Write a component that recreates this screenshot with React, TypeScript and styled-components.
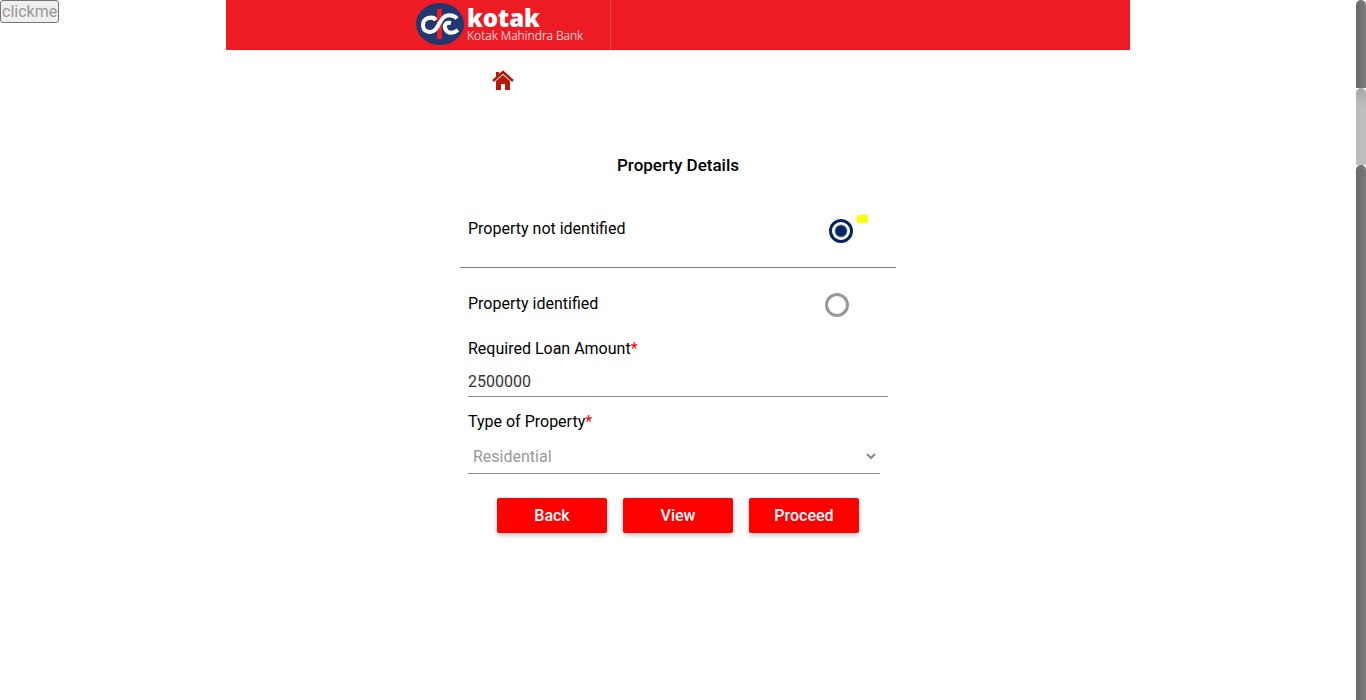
import React, { useState } from "react";
import styled, { createGlobalStyle } from "styled-components";

const GlobalStyle = createGlobalStyle`
  *, *::before, *::after { box-sizing: border-box; }
  body { margin: 0; background: #fff; color: #000; font-family: Roboto, "Liberation Sans", sans-serif; font-size: 16px; }
  button, input, select { font: inherit; }
`;

const Page = styled.div`
  display: flex;
  min-height: 100vh;
`;

const Columns = styled.div`
  flex: 1;
  display: grid;
  grid-template-columns: 1fr 4fr 1fr;
  align-items: start;
`;

const DebugButton = styled.button`
  justify-self: start;
  height: 23px;
  padding: 0 1px;
  border: 1px solid #767676;
  border-radius: 3px;
  background: #efefef;
  color: #999;
  line-height: 20px;
`;

const Header = styled.header`
  display: flex;
  height: 50px;
  background: #ed1c24;
`;

const Brand = styled.a`
  display: flex;
  align-items: flex-start;
  gap: 3px;
  width: 385px;
  padding: 3px 0 0 190px;
  border-right: 1px solid #f2474d;
  color: #fff;
  text-decoration: none;
`;

const BrandText = styled.span`
  display: flex;
  flex-direction: column;
  padding-top: 3px;
  white-space: nowrap;
`;

const BrandName = styled.strong`
  font-family: "Open Sans", "Noto Sans", sans-serif;
  font-size: 24px;
  font-weight: 800;
  line-height: 24px;
`;

const BrandCaption = styled.span`
  font-family: "Noto Sans", sans-serif;
  font-size: 12px;
  font-weight: 300;
  line-height: 12px;
`;

const Main = styled.main`
  width: 436px;
  margin: 0 auto;
  padding-top: 20px;
`;

const HomeLink = styled.a`
  display: block;
  width: 22px;
  height: 22px;
  margin-left: 32px;
`;

const Title = styled.h1`
  margin: 62px 0 0;
  font-size: 17px;
  font-weight: 500;
  line-height: 22px;
  text-align: center;
`;

const OptionRow = styled.label<{ $divided?: boolean }>`
  display: flex;
  align-items: center;
  justify-content: space-between;
  height: ${(p) => (p.$divided ? 56 : 70)}px;
  margin-top: ${(p) => (p.$divided ? 36 : 0)}px;
  padding: ${(p) => (p.$divided ? "0 28px 22px 8px" : "0 47px 0 8px")};
  border-bottom: ${(p) => (p.$divided ? "1px solid #808080" : "none")};
`;

const RadioGroup = styled.span`
  display: flex;
  align-items: flex-start;
  gap: 4px;
`;

const Radio = styled.input`
  appearance: none;
  width: 24px;
  height: 24px;
  margin: 4px 0 0;
  border: 3px solid #999;
  border-radius: 50%;
  background: #fff;

  &:checked {
    border-color: #06245f;
    background: radial-gradient(circle, #06245f 5px, #fff 7px);
  }
`;

const Marker = styled.span`
  width: 11px;
  height: 8px;
  background: #ff0;
`;

const Field = styled.div<{ $inset?: boolean }>`
  display: flex;
  flex-direction: column;
  padding: 0 ${(p) => (p.$inset ? 16 : 8)}px 0 8px;
  margin-bottom: 14px;
`;

const FieldLabel = styled.label`
  line-height: 22px;
`;

const Required = styled.span`
  color: #f00;
`;

const AmountInput = styled.input`
  width: 100%;
  height: 37px;
  padding: 6px 0 0;
  border: 0;
  border-bottom: 1px solid #8e8e93;
  background: transparent;
  color: #333;
  outline: none;
`;

const SelectBox = styled.div`
  display: grid;
  align-items: center;
  height: 41px;
  padding-top: 6px;
  border-bottom: 1px solid #8e8e93;

  > * { grid-area: 1 / 1; }
  > svg { justify-self: end; margin-right: 4px; pointer-events: none; }
`;

const Select = styled.select`
  appearance: none;
  width: 100%;
  height: 32px;
  padding: 0 20px 0 5px;
  border: 0;
  background: transparent;
  color: #999;
  opacity: 1;
`;

const Actions = styled.div`
  display: flex;
  justify-content: center;
  gap: 16px;
  margin-top: 24px;
`;

const ActionButton = styled.button`
  width: 110px;
  height: 35px;
  padding: 0;
  border: 0;
  border-radius: 2px;
  background: #f00;
  box-shadow: 0 2px 5px rgba(0, 0, 0, 0.26);
  color: #fff;
  font-weight: 500;
`;

const ScrollTrack = styled.div`
  position: sticky;
  top: 0;
  display: flex;
  flex-direction: column;
  width: 10px;
  height: 100vh;
  background: #fff;
`;

const ScrollPiece = styled.div<{ $light?: boolean; $size?: number }>`
  flex: ${(p) => (p.$size ? `0 0 ${p.$size}px` : "1")};
  border-radius: 5px 5px 0 0;
  background: ${(p) =>
    p.$light ? "linear-gradient(#a8a8a8, #bebebe 20px)" : "linear-gradient(90deg, #6a6a6a, #7b7b7b)"};
`;

const LogoMark = () => (
  <svg width="48" height="42" viewBox="0 0 48 42" aria-hidden="true">
    <ellipse cx="24" cy="21" rx="24" ry="21" fill="#20386f" />
    <path d="M21 6h5v30h-5z" fill="#ed1c24" />
    <g fill="none" stroke="#fff" strokeWidth="4">
      <path d="M20 17C17 13 7 14 7 22C7 30 16 30.500 20 26C23 22 24 18 27 15C30 11.500 37 11 41 15.500" />
      <path d="M35 20C31 19 28 21 29 25C31 31 37 31 42 27" />
    </g>
    <path d="M21 6h5v7l-4 5h-1zM23 27l3-3v12h-3z" fill="#ed1c24" />
  </svg>
);

const HomeIcon = () => (
  <svg width="22" height="22" viewBox="0 0 22 22" aria-hidden="true">
    <path d="M4 2h3v4L4 8z" fill="#b51a08" />
    <path d="M1 11L11 2l10 9" fill="none" stroke="#b51a08" strokeWidth="2.500" />
    <path d="M11 5l7 6v9h-5v-6H9v6H4v-9z" fill="#b51a08" />
  </svg>
);

export default function App() {
  const [identified, setIdentified] = useState(false);
  const [amount, setAmount] = useState("2500000");

  return (
    <>
      <GlobalStyle />
      <Page>
        <Columns>
          <DebugButton type="button">clickme</DebugButton>
          <div>
            <Header>
              <Brand href="#" aria-label="Kotak Mahindra Bank">
                <LogoMark />
                <BrandText>
                  <BrandName>kotak</BrandName>
                  <BrandCaption>Kotak Mahindra Bank</BrandCaption>
                </BrandText>
              </Brand>
            </Header>
            <Main>
              <HomeLink href="#" aria-label="Home">
                <HomeIcon />
              </HomeLink>
              <Title>Property Details</Title>
              <OptionRow $divided>
                Property not identified
                <RadioGroup>
                  <Radio type="radio" name="property" checked={!identified} onChange={() => setIdentified(false)} />
                  <Marker />
                </RadioGroup>
              </OptionRow>
              <OptionRow>
                Property identified
                <Radio type="radio" name="property" checked={identified} onChange={() => setIdentified(true)} />
              </OptionRow>
              <Field>
                <FieldLabel htmlFor="amount">
                  Required Loan Amount<Required>*</Required>
                </FieldLabel>
                <AmountInput id="amount" value={amount} onChange={(e) => setAmount(e.target.value)} />
              </Field>
              <Field $inset>
                <FieldLabel htmlFor="type">
                  Type of Property<Required>*</Required>
                </FieldLabel>
                <SelectBox>
                  <Select id="type" disabled>
                    <option>Residential</option>
                  </Select>
                  <svg width="10" height="8" viewBox="0 0 10 8" aria-hidden="true">
                    <path d="M1 2l4 4l4-4" fill="none" stroke="#888" strokeWidth="2" />
                  </svg>
                </SelectBox>
              </Field>
              <Actions>
                <ActionButton type="button">Back</ActionButton>
                <ActionButton type="button">View</ActionButton>
                <ActionButton type="button">Proceed</ActionButton>
              </Actions>
            </Main>
          </div>
        </Columns>
        <ScrollTrack aria-hidden="true">
          <ScrollPiece $size={88} />
          <ScrollPiece $light $size={77} />
          <ScrollPiece />
        </ScrollTrack>
      </Page>
    </>
  );
}
